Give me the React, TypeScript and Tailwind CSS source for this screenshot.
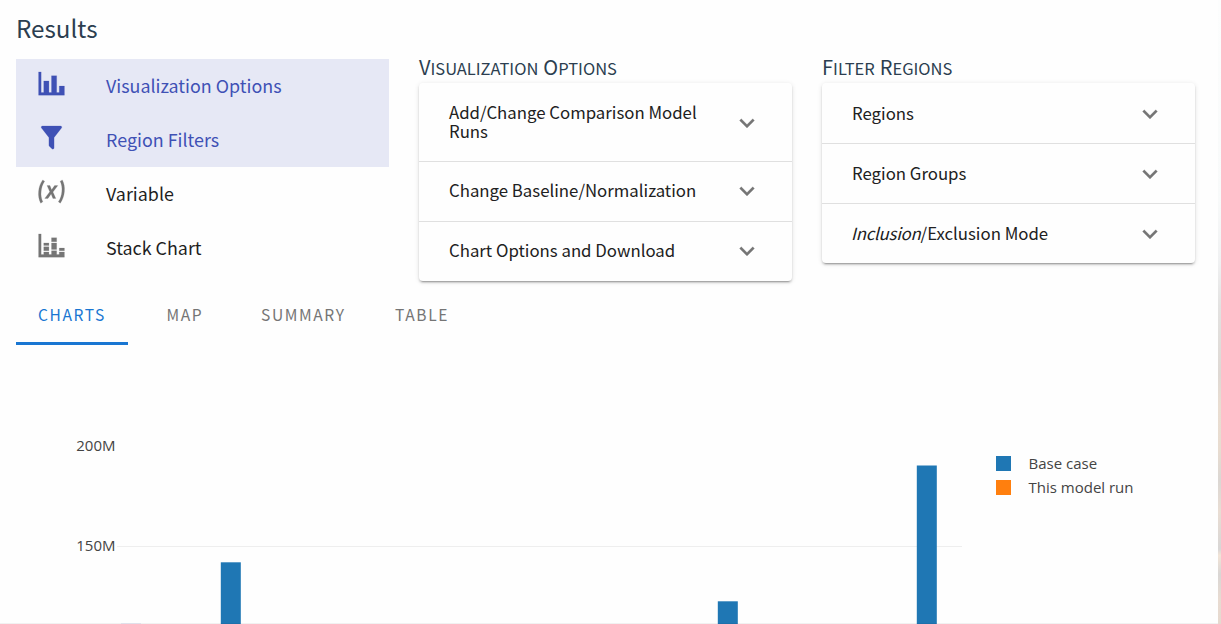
import type { ReactNode } from "react";

const chartBar = "M22,21H2V3H4V19H6V10H10V19H12V6H16V19H18V14H22V21Z";
const filter =
  "M14,12V19.88C14.04,20.18 13.94,20.5 13.71,20.71C13.32,21.1 12.69,21.1 12.3,20.71L10.29,18.7C10.06,18.47 9.96,18.16 10,17.87V12H9.97L4.21,4.62C3.87,4.19 3.95,3.56 4.38,3.22C4.57,3.08 4.78,3 5,3V3H19C19.22,3 19.43,3.08 19.62,3.22C20.05,3.56 20.13,4.19 19.79,4.62L14.03,12H14Z";
const variable =
  "M20.41,3C21.8,5.71 22.35,8.84 22,12C21.8,15.16 20.7,18.29 18.83,21L17.3,20C18.91,17.57 19.85,14.8 20,12C20.34,9.2 19.89,6.43 18.7,4L20.41,3M5.17,3L6.7,4C5.09,6.43 4.15,9.2 4,12C3.66,14.8 4.12,17.57 5.3,20L3.61,21C2.21,18.29 1.65,15.17 2,12C2.2,8.84 3.3,5.71 5.17,3M12.08,10.68L14.4,7.45H16.93L13.15,12.45L15.35,17.37H13.09L11.71,14L9.28,17.33H6.76L10.66,12.21L8.53,7.45H10.8L12.08,10.68Z";
const stacked =
  "M22,21H2V3H4V19H6V17H10V19H12V16H16V19H18V17H22V21M18,14H22V16H18V14M12,6H16V9H12V6M16,15H12V10H16V15M6,10H10V12H6V10M10,16H6V13H10V16Z";
const chevron = "M7.41,8.58L12,13.17L16.59,8.58L18,10L12,16L6,10L7.41,8.58Z";

function Icon({ d, className }: { d: string; className: string }) {
  return (
    <svg viewBox="0 0 24 24" fill="currentColor" stroke="currentColor" strokeWidth="0.15" className={`shrink-0 ${className}`}>
      <path d={d} />
    </svg>
  );
}

function MenuItem({ icon, label, active }: { icon: string; label: string; active?: boolean }) {
  return (
    <li className={`flex h-[54px] items-center pl-[20px] ${active ? "bg-[#e6e8f5] text-[#3f51b5]" : "text-[#1f1f1f]"}`}>
      <Icon d={icon} className={`mb-[5px] size-[31px] ${active ? "" : "text-[#757575]"}`} />
      <span className="mb-[2px] ml-[39px] text-[17.9px] leading-6">{label}</span>
    </li>
  );
}

function Heading({ words }: { words: string[] }) {
  return (
    <h2 className="-mt-1 mb-1 flex h-6 items-baseline gap-[5px] text-[20px] leading-6 text-[#2c3e50]">
      {words.map((w) => (
        <span key={w}>
          {w[0]}
          <span className="text-[16.5px] uppercase">{w.slice(1)}</span>
        </span>
      ))}
    </h2>
  );
}

function Panel({ title, rows, first }: { title: string[]; rows: ReactNode[]; first?: boolean }) {
  return (
    <section className="w-[373px]">
      <Heading words={title} />
      <div className="rounded-[4px] bg-[#fefefe] shadow-[0_3px_1px_-2px_rgba(0,0,0,0.2),0_2px_2px_0_rgba(0,0,0,0.14),0_1px_5px_0_rgba(0,0,0,0.12)]">
        {rows.map((row, i) => (
          <div
            key={i}
            className={`flex items-center justify-between pr-[30px] pl-[30px] ${i > 0 ? "border-t border-[#e0e0e0]" : ""} ${i === 0 && first ? "h-[78px]" : "h-[60px]"}`}
          >
            <span className={`w-[262px] text-[16.8px] leading-[19px] text-[#212121] ${i > 0 && first ? "mb-[2px]" : ""}`}>{row}</span>
            <Icon d={chevron} className={`size-[30px] text-[#757575] ${i === 0 ? "mt-[2px]" : first ? "mb-[1px]" : "mt-[1px]"}`} />
          </div>
        ))}
      </div>
    </section>
  );
}

function Chart() {
  return (
    <svg width="1218" height="279" viewBox="0 345 1218 279" className="block" fontFamily="'Open Sans', sans-serif" fontSize="15" fill="#444">
      <path d="M117 546.5H962" stroke="#eee" />
      <text x="115.5" y="451" textAnchor="end">200M</text>
      <text x="115.5" y="551" textAnchor="end">150M</text>
      <g fill="#1f77b4">
        <rect x="220.8" y="562.3" width="20" height="62" />
        <rect x="717.8" y="601.3" width="20" height="23" />
        <rect x="916.8" y="465.5" width="20" height="159" />
        <rect x="996" y="456" width="15" height="15" />
      </g>
      <rect x="996" y="480" width="15" height="15" fill="#ff7f0e" />
      <text x="1028.5" y="469">Base case</text>
      <text x="1028.5" y="493">This model run</text>
      <path d="M0 623.5H1218" stroke="#000" strokeOpacity="0.05" />
      <path d="M121 623.5H141" stroke="#e0e0ea" />
    </svg>
  );
}

export default function App() {
  return (
    <div className="flex h-[624px] w-[1221px] overflow-hidden bg-[#fefefe] font-['Noto_Sans_CJK_SC',sans-serif]">
      <main className="w-[1218px]">
        <h1 className="h-[59px] pt-[10px] pl-4 text-[24.2px] leading-9 text-[#2c3e50]">Results</h1>
        <div className="flex h-[227px] gap-[30px] pl-4">
          <ul className="w-[373px]">
            <MenuItem icon={chartBar} label="Visualization Options" active />
            <MenuItem icon={filter} label="Region Filters" active />
            <MenuItem icon={variable} label="Variable" />
            <MenuItem icon={stacked} label="Stack Chart" />
          </ul>
          <Panel
            title={["Visualization", "Options"]}
            first
            rows={["Add/Change Comparison Model Runs", "Change Baseline/Normalization", "Chart Options and Download"]}
          />
          <Panel
            title={["Filter", "Regions"]}
            rows={["Regions", "Region Groups", <><i className="-ml-px tracking-[-0.22px]">Inclusion</i>/Exclusion Mode</>]}
          />
        </div>
        <nav className="flex h-[59px] pl-4 text-[15.6px] tracking-[1.6px] text-[#757575]">
          <span className="flex w-28 items-center border-b-3 border-[#1976d2] pt-[1px] pl-[22px] text-[#1976d2]">CHARTS</span>
          <span className="flex w-[95px] items-center pb-[2px] pl-[38.5px]">MAP</span>
          <span className="flex w-[134px] items-center pb-[2px] pl-[38px]">SUMMARY</span>
          <span className="flex w-[112px] items-center pb-[2px] pl-[38px]">TABLE</span>
        </nav>
        <Chart />
      </main>
      <div className="w-[3px] bg-[linear-gradient(#fcfdfd_0%,#f8fafa_32%,#f0f1f2_42%,#e3e2e1_49%,#ded8d3_60%,#e9ddd1_65%,#e8dcd0_72%,#dbd7d3_77%,#e9ddd3_82%,#d8d6d5_88%,#f2e4d7_89%,#d9d6d4_92%,#e8dbd1_96%,#e6d9cf_100%)]" />
    </div>
  );
}
